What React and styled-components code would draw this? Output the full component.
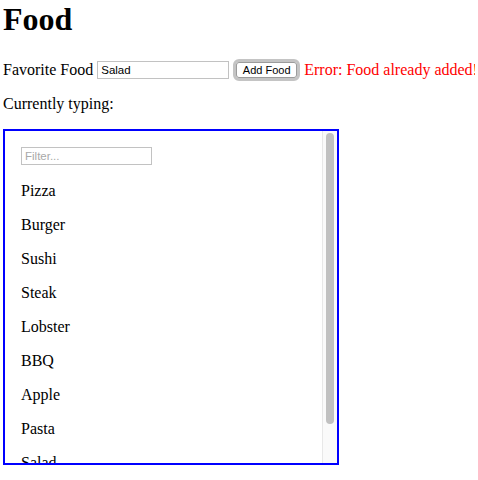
import React, { useState } from "react";
import styled, { createGlobalStyle } from "styled-components";

const Global = createGlobalStyle`
  html, body { background: #fff; }
  body {
    margin: 0 3px;
    font-family: "Liberation Serif", "Times New Roman", serif;
    font-size: 16px;
    color: #000;
  }
`;

const Title = styled.h1`
  font-size: 32px;
  line-height: 37px;
  font-weight: bold;
  margin: 1px 0 21px;
`;

const Row = styled.div`
  display: flex;
  align-items: center;
  gap: 4px;
  height: 21px;
  line-height: 18px;
  white-space: nowrap;
  & > * { flex: none; }
`;

const Label = styled.label`
  font-size: 16px;
`;

const TextInput = styled.input`
  box-sizing: border-box;
  width: ${(p) => p.$w || 131}px;
  height: 18px;
  margin: 0;
  padding: 1px 3px;
  border: 1px solid #c2c2c2;
  border-radius: 0;
  font-family: "Liberation Sans", Arial, sans-serif;
  font-size: 11.5px;
  color: #000;
  background: #fff;
  outline: none;
  &::placeholder { color: #a9a9a9; }
`;

const Button = styled.button`
  box-sizing: border-box;
  width: 67px;
  height: 22px;
  margin: 0;
  padding: 0;
  border: 3px solid #c4c4c4;
  border-radius: 6px;
  background: #fff;
  box-shadow: inset 0 0 0 1px #9c9c9c;
  font-family: "Liberation Sans", Arial, sans-serif;
  font-size: 11px;
  color: #000;
`;

const ErrorText = styled.span`
  color: #f00;
  font-size: 16px;
`;

const Typing = styled.p`
  margin: 15px 0 16px;
  line-height: 18px;
`;

const ListBox = styled.div`
  box-sizing: border-box;
  width: 336px;
  height: 336px;
  border: 2px solid #00f;
  display: flex;
`;

const ListContent = styled.div`
  flex: 1;
  min-width: 0;
  padding: 16px;
  overflow: hidden;
`;

const ScrollTrack = styled.div`
  flex: none;
  box-sizing: border-box;
  width: 15px;
  background: #fafafa;
  border-left: 1px solid #e8e8e8;
  padding: 2px 3px 0 3px;
`;

const ScrollThumb = styled.div`
  width: 8px;
  height: 291px;
  border-radius: 4px;
  background: #c1c1c1;
`;

const FilterWrap = styled.div`
  height: 19px;
  display: flex;
`;

const Item = styled.p`
  margin: 16px 0;
  line-height: 18px;
`;

const foods = ["Pizza", "Burger", "Sushi", "Steak", "Lobster", "BBQ", "Apple", "Pasta", "Salad"];

export default function App() {
  const [value, setValue] = useState("Salad");
  const [filter, setFilter] = useState("");
  return (
    <>
      <Global />
      <Title>Food</Title>
      <Row>
        <Label>Favorite Food</Label>
        <TextInput $w={132} value={value} onChange={(e) => setValue(e.target.value)} />
        <Button>Add Food</Button>
        <ErrorText>Error: Food already added!</ErrorText>
      </Row>
      <Typing>Currently typing:</Typing>
      <ListBox>
        <ListContent>
          <FilterWrap>
            <TextInput placeholder="Filter..." value={filter} onChange={(e) => setFilter(e.target.value)} />
          </FilterWrap>
          {foods
            .filter((f) => f.toLowerCase().includes(filter.toLowerCase()))
            .map((f) => (
              <Item key={f}>{f}</Item>
            ))}
        </ListContent>
        <ScrollTrack>
          <ScrollThumb />
        </ScrollTrack>
      </ListBox>
    </>
  );
}
